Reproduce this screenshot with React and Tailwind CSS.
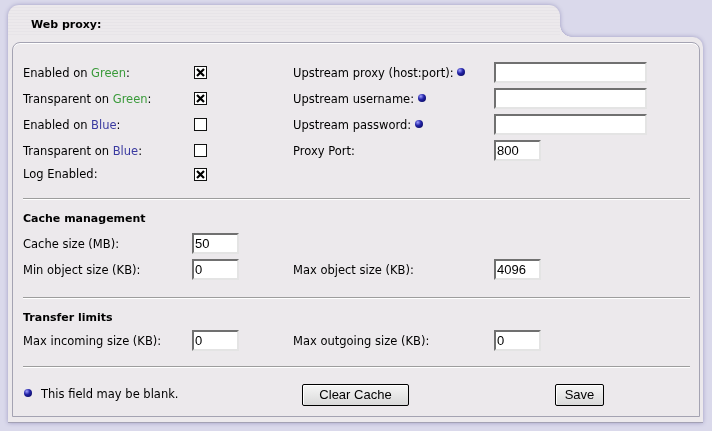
import React from 'react';

const PANEL = 'bg-[#ece9ec]';

const Ball = ({ className = '' }) => (
    <span className={`inline-block h-[8px] w-[8px] rounded-full bg-[radial-gradient(circle_at_35%_30%,#a0a0ff_0,#2424a8_40%,#00004a_100%)] ${className}`} />
);

const Check = ({ checked }) => (
    <span className="ml-[2px] flex h-[13px] w-[13px] items-center justify-center border border-[#111] bg-white">
        {checked && (
            <svg width="9" height="9" viewBox="0 0 9 9">
                <path d="M1 1L8 8M8 1L1 8" stroke="#000" strokeWidth="2.2" />
            </svg>
        )}
    </span>
);

const Field = ({ value = '', wide }) => (
    <input
        readOnly
        value={value}
        className={`h-[21px] ${wide ? 'w-[153px]' : 'w-[47px]'} border-2 border-t-[#707070] border-l-[#707070] border-r-[#e4e4e4] border-b-[#e4e4e4] bg-white px-px font-['Liberation_Sans',Arial,sans-serif] text-[13px] leading-none text-black outline-none`}
    />
);

const Label = ({ children }) => (
    <span className="text-[11.5px] leading-[16px] text-black">{children}</span>
);

const Separator = ({ className = '' }) => (
    <div className={`border-t border-b border-t-[#9d9d9d] border-b-white ${className}`} />
);

const Heading = ({ children, className = '' }) => (
    <div className={`h-[14px] font-bold leading-[14px] text-black ${className}`}>{children}</div>
);

const Button = ({ children, className = '' }) => (
    <button className={`h-[22px] rounded-[2px] border border-black bg-[linear-gradient(#f6f6f6,#d9d9d9)] font-['Liberation_Sans',Arial,sans-serif] text-[13px] text-black shadow-[inset_1px_1px_0_#fff] ${className}`}>
        {children}
    </button>
);

export default function App() {
    return (
        <div className="h-[431px] w-[712px] overflow-hidden bg-[#dad9eb] pl-[8px] pr-[9px] pt-[5px] font-['DejaVu_Sans',Verdana,sans-serif] text-[11px]">
            <div className="drop-shadow-[0_0_2px_#9e9bc2]">
                {/* tab */}
                <div className="flex h-[32px]">
                    <div className={`w-[552px] rounded-t-[11px] ${PANEL} bg-[repeating-linear-gradient(#ece9ec_0,#ece9ec_2px,#e7e4e8_2px,#e7e4e8_3px)] pl-[23px] pt-[13px]`}>
                        <div className="font-bold leading-[14px] text-black">Web proxy:</div>
                    </div>
                    <div className="flex flex-1 items-end">
                        <div className="h-[12px] w-[12px] bg-[radial-gradient(circle_at_100%_0,transparent_11.5px,#ece9ec_12px)]" />
                    </div>
                </div>

                {/* body */}
                <div className={`flex h-[386px] flex-col rounded-tr-[10px] ${PANEL} border-b border-[#a3a1b4] pb-[5px] pl-[4px] pr-[3px] pt-[5px]`}>
                    <div className="flex flex-1 flex-col rounded-t-[8px] border border-[#a4a3b2] pl-[10px] pr-[9px] pt-[19px] shadow-[inset_0_1px_0_#fff]">
                        {/* main settings */}
                        <div className="grid grid-cols-[169px_101px_201px_1fr] items-center gap-y-[5px]">
                            <Label>Enabled on <span className="text-[#3a9a3a]">Green</span>:</Label>
                            <Check checked />
                            <Label>Upstream proxy (host:port): <Ball className="align-[1px]" /></Label>
                            <Field wide />

                            <Label>Transparent on <span className="text-[#3a9a3a]">Green</span>:</Label>
                            <Check checked />
                            <Label>Upstream username: <Ball className="align-[1px]" /></Label>
                            <Field wide />

                            <Label>Enabled on <span className="text-[#3a3aa0]">Blue</span>:</Label>
                            <Check />
                            <Label>Upstream password: <Ball className="align-[1px]" /></Label>
                            <Field wide />

                            <Label>Transparent on <span className="text-[#3a3aa0]">Blue</span>:</Label>
                            <Check />
                            <Label>Proxy Port:</Label>
                            <Field value="800" />

                            <Label>Log Enabled:</Label>
                            <Check checked />
                            <span />
                            <span />
                        </div>

                        <Separator className="mt-[16px]" />

                        {/* cache management */}
                        <Heading className="mt-[12px]">Cache management</Heading>
                        <div className="mt-[7px] grid grid-cols-[169px_101px_201px_1fr] items-center gap-y-[5px]">
                            <Label>Cache size (MB):</Label>
                            <Field value="50" />
                            <span />
                            <span />

                            <Label>Min object size (KB):</Label>
                            <Field value="0" />
                            <Label>Max object size (KB):</Label>
                            <Field value="4096" />
                        </div>

                        <Separator className="mt-[17px]" />

                        {/* transfer limits */}
                        <Heading className="mt-[12px]">Transfer limits</Heading>
                        <div className="mt-[5px] grid grid-cols-[169px_101px_201px_1fr] items-center">
                            <Label>Max incoming size (KB):</Label>
                            <Field value="0" />
                            <Label>Max outgoing size (KB):</Label>
                            <Field value="0" />
                        </div>

                        <Separator className="mt-[15px]" />

                        {/* footer */}
                        <div className="mt-[16px] grid grid-cols-[279px_253px_1fr] items-center">
                            <div className="flex items-center">
                                <Ball className="mb-[5px] ml-px" />
                                <span className="ml-[9px] text-[11.5px] text-black">This field may be blank.</span>
                            </div>
                            <Button className="w-[107px]">Clear Cache</Button>
                            <Button className="w-[49px]">Save</Button>
                        </div>
                    </div>
                </div>
            </div>
        </div>
    );
}
